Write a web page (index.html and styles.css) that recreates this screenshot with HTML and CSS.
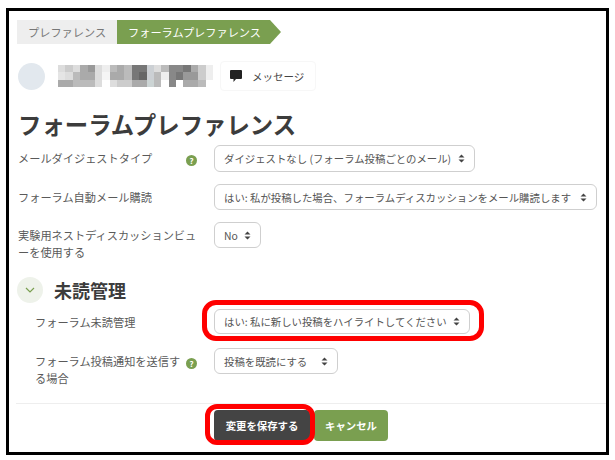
FILE: index.html
```html
<!DOCTYPE html>
<html lang="ja">
<head>
    <meta charset="UTF-8">
    <meta name="viewport" content="width=device-width, initial-scale=1.0">
    <title>フォーラムプレファレンス</title>
    <link rel="stylesheet" href="styles.css">
</head>
<body>
    <div class="frame">
        <div class="crumbs">
            <span class="crumb">プレファレンス</span>
            <span class="crumb-active">フォーラムプレファレンス</span>
        </div>
        <div class="user">
            <div class="avatar"></div>
            <svg class="mosaic" width="155" height="22" viewBox="0 0 21 3" preserveAspectRatio="none" shape-rendering="crispEdges">
                <g>
                    <rect x="0" y="0" width="1" height="1" fill="#ddd"/><rect x="1" y="0" width="1" height="1" fill="#ccc"/><rect x="2" y="0" width="1" height="1" fill="#ddd"/><rect x="3" y="0" width="1" height="1" fill="#aaa"/><rect x="4" y="0" width="1" height="1" fill="#999"/><rect x="5" y="0" width="1" height="1" fill="#ddd"/><rect x="6" y="0" width="1" height="1" fill="#eee"/><rect x="7" y="0" width="1" height="1" fill="#bbb"/><rect x="8" y="0" width="1" height="1" fill="#aaa"/><rect x="9" y="0" width="1" height="1" fill="#bbb"/><rect x="10" y="0" width="2" height="1" fill="#777"/><rect x="12" y="0" width="1" height="1" fill="#ccd0d4"/><rect x="13" y="0" width="1" height="1" fill="#ddd"/><rect x="14" y="0" width="1" height="1" fill="#bbb"/><rect x="15" y="0" width="2" height="1" fill="#888"/><rect x="17" y="0" width="1" height="1" fill="#777"/><rect x="18" y="0" width="1" height="1" fill="#aaa"/><rect x="19" y="0" width="1" height="1" fill="#ccc"/><rect x="20" y="0" width="1" height="1" fill="#eee"/>
                    <rect x="0" y="1" width="1" height="1" fill="#e5e5e5"/><rect x="1" y="1" width="1" height="1" fill="#ddd"/><rect x="2" y="1" width="1" height="1" fill="#bbb"/><rect x="3" y="1" width="2" height="1" fill="#aaa"/><rect x="5" y="1" width="1" height="1" fill="#ddd"/><rect x="6" y="1" width="1" height="1" fill="#f5f5f5"/><rect x="7" y="1" width="2" height="1" fill="#aaa"/><rect x="9" y="1" width="1" height="1" fill="#bbb"/><rect x="10" y="1" width="1" height="1" fill="#777"/><rect x="11" y="1" width="1" height="1" fill="#666"/><rect x="12" y="1" width="1" height="1" fill="#ccd0d4"/><rect x="13" y="1" width="1" height="1" fill="#bbb"/><rect x="14" y="1" width="1" height="1" fill="#eee"/><rect x="15" y="1" width="1" height="1" fill="#888"/><rect x="16" y="1" width="1" height="1" fill="#777"/><rect x="17" y="1" width="2" height="1" fill="#999"/><rect x="19" y="1" width="1" height="1" fill="#ccc"/><rect x="20" y="1" width="1" height="1" fill="#eee"/>
                    <rect x="0" y="2" width="2" height="1" fill="#aaa"/><rect x="2" y="2" width="3" height="1" fill="#bbb"/><rect x="5" y="2" width="1" height="1" fill="#ddd"/><rect x="7" y="2" width="1" height="1" fill="#ddd"/><rect x="8" y="2" width="2" height="1" fill="#ccc"/><rect x="10" y="2" width="2" height="1" fill="#aaa"/><rect x="12" y="2" width="1" height="1" fill="#ccd4d4"/><rect x="13" y="2" width="1" height="1" fill="#bbb"/><rect x="15" y="2" width="1" height="1" fill="#888"/><rect x="17" y="2" width="2" height="1" fill="#aaa"/><rect x="19" y="2" width="1" height="1" fill="#bbb"/>
                </g>
            </svg>
            <div class="msg-btn">
                <svg width="12" height="12" viewBox="0 0 12 12"><path d="M1 0h10a1 1 0 0 1 1 1v7a1 1 0 0 1-1 1H6l-2.500 3V9H1a1 1 0 0 1-1-1V1a1 1 0 0 1 1-1z" fill="#222"/></svg>
                <span>メッセージ</span>
            </div>
        </div>
        <h1 class="title">フォーラムプレファレンス</h1>

        <div class="row row-digest">
            <div class="cell">
                <label class="label">メールダイジェストタイプ</label>
                <span class="help">?</span>
            </div>
            <select class="sel sel-digest"><option>ダイジェストなし (フォーラム投稿ごとのメール)</option></select>
        </div>
        <div class="row">
            <div class="cell">
                <label class="label">フォーラム自動メール購読</label>
            </div>
            <select class="sel sel-sub"><option>はい: 私が投稿した場合、フォーラムディスカッションをメール購読します</option></select>
        </div>
        <div class="row">
            <div class="cell">
                <label class="label">実験用ネストディスカッションビューを使用する</label>
            </div>
            <select class="sel sel-no"><option>No</option></select>
        </div>

        <div class="section">
            <span class="chevron">
                <svg width="10" height="6" viewBox="0 0 10 6"><path d="M1 1l4 4 4-4" fill="none" stroke="#7a9f50" stroke-width="1.2"/></svg>
            </span>
            <h2 class="section-title">未読管理</h2>
        </div>

        <div class="row row-indent row-track">
            <div class="cell">
                <label class="label">フォーラム未読管理</label>
            </div>
            <div class="mark">
                <select class="sel sel-track"><option>はい: 私に新しい投稿をハイライトしてください</option></select>
            </div>
        </div>
        <div class="row row-indent row-read">
            <div class="cell">
                <label class="label">フォーラム投稿通知を送信する場合</label>
                <span class="help">?</span>
            </div>
            <select class="sel sel-read"><option>投稿を既読にする</option></select>
        </div>

        <div class="actions">
            <div class="mark mark-save"><button class="btn btn-save">変更を保存する</button></div>
            <button class="btn btn-cancel">キャンセル</button>
        </div>
    </div>
</body>
</html>
```

FILE: styles.css
```css
*{
    margin: 0;
    padding: 0;
    box-sizing: border-box;
    font-family: "Noto Sans CJK JP", "Noto Sans", sans-serif;
}
body{
    background: #fff;
    color: #555;
    font-size: 11.2px;
}
.frame{
    width: 603px;
    height: 447px;
    margin: 8px 0 0 6px;
    border: 3px solid #000;
    padding: 9px 0 0 8px;
    background: #fff;
}
.crumbs{
    display: flex;
    height: 24px;
    line-height: 24px;
}
.crumb{
    width: 100px;
    background: #eee;
    color: #777;
    padding-left: 11px;
}
.crumb-active{
    width: 164px;
    background: #7a9f50;
    color: #fff;
    padding-left: 11px;
    clip-path: polygon(0 0, 153px 0, 100% 50%, 153px 100%, 0 100%);
}
.user{
    display: flex;
    align-items: center;
    margin: 17px 0 0 1px;
    height: 30px;
}
.avatar{
    width: 27px;
    height: 27px;
    border-radius: 50%;
    background: #e2e8ee;
    margin-right: 13px;
}
.mosaic{
    filter: blur(0.6px);
    margin-right: 7px;
}
.msg-btn{
    display: flex;
    align-items: center;
    gap: 10px;
    width: 96px;
    height: 30px;
    padding-left: 9px;
    border: 1px solid #f7f7f7;
    border-radius: 4px;
    color: #444;
    font-size: 10.5px;
}
.title{
    font-size: 23.4px;
    font-weight: 700;
    line-height: 32px;
    color: #3c3c3c;
    margin: 17px 0 0 1px;
}
.row{
    display: flex;
    align-items: flex-start;
    margin-top: 12px;
}
.row-digest{
    margin-top: 5px;
}
.row-track{
    margin-top: 6px;
}
.row-read{
    margin-top: 14px;
}
.cell{
    display: flex;
    align-items: flex-start;
    width: 197px;
    padding-right: 17px;
    flex: none;
}
.label{
    flex: 1;
    padding: 5px 0 0 1px;
    line-height: 17px;
    color: #5a5a5a;
}
.row-indent .label{
    padding-left: 18px;
}
.help{
    width: 11px;
    height: 11px;
    margin-top: 10px;
    border-radius: 50%;
    background: #7a9f50;
    color: #fff;
    font-size: 8px;
    font-weight: 700;
    line-height: 11px;
    text-align: center;
    flex: none;
}
.sel{
    display: block;
    appearance: none;
    height: 26px;
    border: 1px solid #cfcfcf;
    border-radius: 6px;
    background: #fff url("data:image/svg+xml,%3Csvg xmlns='http://www.w3.org/2000/svg' width='7' height='9'%3E%3Cpath d='M3.500 0.500L6.500 3.500H0.500zM3.500 8.500L0.500 5.500H6.500z' fill='%23444'/%3E%3C/svg%3E") no-repeat right 9px center;
    color: #555;
    font-size: 10.4px;
    padding-left: 9px;
}
.sel-digest{
    width: 261px;
    height: 27px;
}
.sel-sub{
    width: 383px;
}
.sel-no{
    width: 47px;
}
.sel-track{
    width: 256px;
    height: 25px;
}
.sel-read{
    width: 124px;
}
.section{
    display: flex;
    align-items: center;
    gap: 11px;
    margin-top: 16px;
}
.chevron{
    display: flex;
    align-items: center;
    justify-content: center;
    width: 26px;
    height: 26px;
    border-radius: 50%;
    background: #eef2ea;
}
.section-title{
    font-size: 18px;
    font-weight: 700;
    line-height: 26px;
    color: #3c3c3c;
}
.mark{
    position: relative;
}
.mark::after{
    content: "";
    position: absolute;
    top: -9px;
    right: -14px;
    bottom: -7px;
    left: -12px;
    border: 5px solid #f00;
    border-radius: 14px;
}
.actions{
    display: flex;
    gap: 4px;
    margin: 16px 0 0 -1px;
    padding: 6px 0 0 198px;
    border-top: 1px solid #eee;
}
.btn{
    height: 31px;
    border: 0;
    border-radius: 4px;
    color: #fff;
    font-size: 10.4px;
    font-weight: 700;
}
.btn-save{
    display: block;
    width: 96px;
    background: #444;
}
.btn-cancel{
    width: 74px;
    background: #7a9f50;
}
.mark-save::after{
    top: -6px;
    right: -5px;
    bottom: -4px;
    left: -9px;
    border-radius: 12px;
}
```
